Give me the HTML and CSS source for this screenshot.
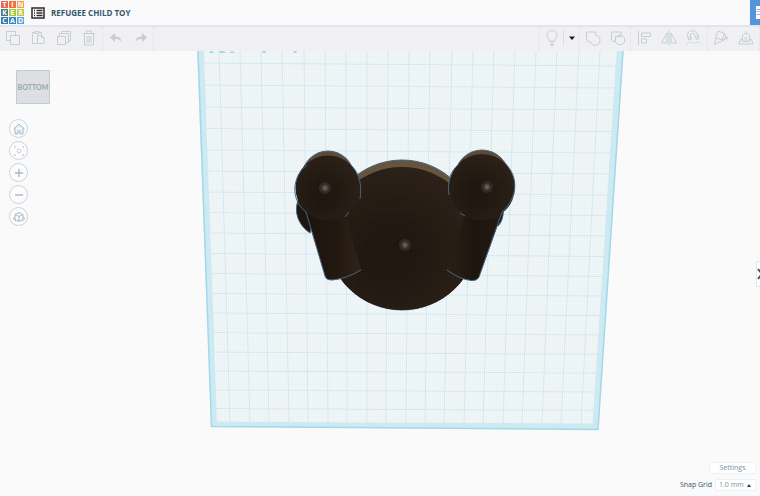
FILE: index.html
```html
<!DOCTYPE html>
<html lang="en">
<head>
<meta charset="utf-8">
<title>REFUGEE CHILD TOY</title>
<link rel="stylesheet" href="styles.css">
</head>
<body>
<header class="header">
  <a class="logo" href="#" aria-label="Tinkercad home">
    <span class="red">T</span><span class="orange">I</span><span class="peach">N</span>
    <span class="slate">K</span><span class="green">E</span><span class="lime">R</span>
    <span class="navy">C</span><span class="blue">A</span><span class="sky">D</span>
  </a>
  <button class="menu" aria-label="Designs">
    <svg width="14" height="12" viewBox="0 0 14 12"><rect x="1" y="1" width="12" height="10" fill="#fff" stroke="#3c3537" stroke-width="1.6"/><path d="M3 3.5h1M3 6h1M3 8.5h1M5.500 3.500h6M5.500 6h6M5.500 8.500h6" stroke="#302a30" stroke-width="1.3"/></svg>
  </button>
  <h1 class="title">REFUGEE CHILD TOY</h1>
  <button class="view" aria-label="3D design view">
    <svg width="10" height="25" viewBox="0 0 10 25"><path d="M6 6h4v5H6zM6 11.500h4v3H6zM6 15h4v4H6z" fill="#fff"/><path d="M7 9.500h3M7 14.500h3" stroke="#83b2e2"/></svg>
  </button>
</header>
<nav class="toolbar" aria-label="Tools">
  <div class="group edit">
    <button aria-label="Copy"><svg viewBox="0 0 16 16"><path d="M1.500 1.500h9v9h-9z"/><path d="M5.500 5.500h9v9h-9z" fill="#f0f0f3"/></svg></button>
    <button aria-label="Paste"><svg viewBox="0 0 16 16"><path d="M7 13.500H2.500v-11H5M9 2.500h2.500V5M5 1.500h4v2H5z"/><path d="M7.500 5.500h4l2.500 2v6H7.500zM11.500 5.500v2H14"/></svg></button>
    <button aria-label="Duplicate"><svg viewBox="0 0 16 16"><path d="M5.500 1.500h9v9h-9z"/><path d="M3.500 3.500h9v9h-9z" fill="#f0f0f3"/><path d="M1.500 6.500h8v8h-8z" fill="#f0f0f3"/></svg></button>
    <button aria-label="Delete"><svg viewBox="0 0 16 16"><path d="M2 3.500h12M5.500 3V1h5v2M3.500 4v11h9V4M6 6v7M8 6v7M10 6v7"/></svg></button>
  </div>
  <div class="group history">
    <button aria-label="Undo"><svg viewBox="0 0 16 16"><path d="M7 3v3.500c4 0 6 1.500 6.500 5.500C12 9.500 10 9 7 9v3L2 7.500z" fill="#c3ced6" stroke="none"/></svg></button>
    <button aria-label="Redo"><svg viewBox="0 0 16 16"><path d="M9 3v3.500c-4 0-6 1.500-6.500 5.500C4 9.500 6 9 9 9v3l5-4.500z" fill="#c3ced6" stroke="none"/></svg></button>
  </div>
  <div class="group visibility">
    <button aria-label="Show all"><svg viewBox="0 0 16 16"><path d="M5.500 11C5.500 9 3 8.500 3 5.500a5 5 0 0 1 10 0c0 3-2.500 3.500-2.500 5.500zM6 12.500h4M6 14.500h4M7 15.500h2"/></svg></button>
    <button class="drop" aria-label="Visibility options"><svg viewBox="0 0 16 16"><path d="M5 6.500h6L8 10z" fill="#16191e" stroke="none"/></svg></button>
  </div>
  <div class="group combine">
    <button aria-label="Group"><svg viewBox="0 0 16 16"><path d="M1.500 2h9v3.200a5 5 0 1 1-5.300 6.300H3L1.500 10z"/></svg></button>
    <button aria-label="Ungroup"><svg viewBox="0 0 16 16"><path d="M5 11.500H3L1.500 10V2H11v3"/><circle cx="10" cy="10" r="4.800"/><path d="M5.500 11V6.500H11"/></svg></button>
  </div>
  <div class="group arrange">
    <button aria-label="Align"><svg viewBox="0 0 16 16"><path d="M2.500 1v14M5.500 3h9v3.500h-9zM5.500 9h5v4h-5z"/></svg></button>
    <button aria-label="Mirror"><svg viewBox="0 0 16 16"><path d="M8 .5v15M6 3v10H.5zM10 3v10h5.500z"/></svg></button>
    <button aria-label="Snap"><svg viewBox="0 0 16 16"><path d="M3 10C0 4 2 .8 6.500 .8c4 0 5 3 6.500 7.700l-2.500 1C9 5.500 8.500 3.300 6.500 3.300 4 3.300 4 5.500 5.500 9zM2.500 8l2.300-1M9.500 7l2.800-1"/><path d="M1 14c4-4 5 0 8-1s3-2 6 1" stroke-dasharray="2 1"/></svg></button>
  </div>
  <div class="group place">
    <button aria-label="Workplane"><svg viewBox="0 0 16 16"><path d="M3 8L1.500 14.500 15 8l-2.500-2M5 1l6.500 2.500L9 10 2.500 7.500zM11.500 3.500L13 8l-4 2"/></svg></button>
    <button aria-label="Cruise"><svg viewBox="0 0 16 16"><path d="M4 9.500H2.500L1 14h14l-1.500-4.500H12M4.500 11.500V7c0-2 1-3.500 3.500-3.500S11.500 5 11.500 7v4.500zM8 1v2.500M6.500 8h3M6.500 10h3"/></svg></button>
  </div>
</nav>
<main class="workspace">
  <svg class="scene" viewBox="0 51 760 445" preserveAspectRatio="xMidYMin slice" role="img" aria-label="Workplane with bear model">
    <defs>
      <pattern id="fine" width="2" height="2" patternUnits="userSpaceOnUse"><path d="M0 0h1v1H0z" fill="#e6f0f2"/></pattern>
      <pattern id="mesh" width="2" height="2" patternUnits="userSpaceOnUse"><path d="M0 0h1v1H0z" fill="#44372a" opacity=".28"/></pattern>
      <radialGradient id="skin" cx=".42" cy=".6" r=".65"><stop offset=".2" stop-color="#1e160f"/><stop offset="1" stop-color="#2b2118"/></radialGradient>
      <linearGradient id="arm"><stop stop-color="#1b140e"/><stop offset=".55" stop-color="#21180f"/><stop offset="1" stop-color="#302419"/></linearGradient>
      <linearGradient id="arm2"><stop stop-color="#2b2016"/><stop offset=".5" stop-color="#1d150f"/><stop offset="1" stop-color="#261b12"/></linearGradient>
      <g id="pole"><circle r="6" fill="#342a22"/><circle r="3.500" fill="#42372f"/><path d="M-3 0h6M0-3v6M-2-2l4 4M2-2l-4 4" stroke="#766e68" stroke-width=".7"/></g>
    </defs>
    <path d="M197 51L211.500 427 598 429.500 623.500 51z" fill="#cdeaf3"/>
    <path d="M204 51L217 421.500 592.500 423.500 616.500 51z" fill="#f0f6f8"/>
    <path d="M204 51L217 421.500 592.500 423.500 616.500 51z" fill="url(#fine)"/>
    <path d="M219 51l11 374M240 51l10 374M261 51l8 374M282 51l7 374M304 51l4 374M325 51l3 374M346 51l1 374M367 51v374M388 51l-2 374M409 51l-3 374M430 51l-5 374M452 51l-8 374M473 51l-9 374M494 51l-11 374M515 51l-12 374M536 51l-14 374M557 51l-15 374M579 51l-18 374M600 51l-19 374" class="grid"/>
    <path d="M199 63l423 3M200 85l420 3M201 107l418 3M202 128.500l415 3M203 150l413 3M203 171l411 3M204 192l409 3M205 212.500l407 3M206 233l404 3M206 253.500l403 3M207 273.500l400 3M208 293.500l398 2.500M208 313l396 2.500M209 332.500l394 2.500M210 352l391 2.500M210 371l390 2M211 390l388 2M211 408.500l387 2" class="grid"/>
    <path d="M198 51L211.500 426.500 598 429.500 623 51" fill="none" stroke="#a3d8ea" stroke-width="1.500"/>
    <path d="M210 51h3v1h1v1h-5v-1h1zM219 51h5v1h2v1h-6v-1h-1zM231 51h2v1h2v1h-5v-1h1zM262 51h4v2h-3v-1h-1zM293 51h4v1h-1v1h-2v-1h-1z" fill="#a9d9e8"/>
    <g stroke="#47637a" stroke-width="1">
      <path d="M299 198C293 211 298 225 310 233l8-30z" fill="#1e1711"/>
      <path d="M503 208c1 7-1 14-5 18l-7-12z" fill="#1e1711"/>
      <ellipse cx="402" cy="235" rx="75" ry="75" fill="#67543f"/>
      <circle cx="328" cy="177" r="26" fill="#5c4a37"/>
      <circle cx="482" cy="177" r="27" fill="#5c4a37"/>
    </g>
    <ellipse cx="402" cy="238.500" rx="74.500" ry="71.500" fill="url(#skin)"/>
    <ellipse cx="402" cy="238.500" rx="74.500" ry="71.500" fill="url(#mesh)" opacity=".6"/>
    <path d="M305 208L325 276q1 4 7 4 14-1 29-10L345 214z" fill="url(#arm)"/>
    <path d="M504 208L479 277q-2 4-8 3.500-12-1.500-24-10.500L465 214z" fill="url(#arm2)"/>
    <circle cx="328" cy="188" r="32.500" fill="url(#skin)"/>
    <circle cx="482" cy="187" r="33" fill="url(#skin)"/>
    <circle cx="328" cy="188" r="32.500" fill="url(#mesh)" opacity=".5"/>
    <circle cx="482" cy="187" r="33" fill="url(#mesh)" opacity=".5"/>
    <path d="M307 165C292 176 290 200 306 212L325 276q1 4 7 4 14-1 29-10M351 165c9 9 11 21 9 34M345 217l4-5M459 164c-9 7-12 18-10 31M460 213l5 3M447 270q12 9 24 10.500 6 .5 8-3.500l23-65c16-15 17-35 3-49" fill="none" stroke="#466681"/>
    <use href="#pole" x="325" y="188"/><use href="#pole" x="487" y="187"/><use href="#pole" x="405" y="245"/>
  </svg>
  <aside class="camera">
    <button class="cube">BOTTOM</button>
    <button class="round" aria-label="Home view"><svg viewBox="0 0 16 16"><path d="M2.500 8L8 3l5.500 5M4 7v6h3v-3h2v3h3V7" fill="#e6f1f6"/></svg></button>
    <button class="round" aria-label="Fit view"><svg class="faint" viewBox="0 0 16 16"><circle cx="8" cy="8" r="2"/><path d="M3.500 5V3.500H5M11 3.500h1.500V5M3.500 11v1.500H5M11 12.500h1.500V11"/></svg></button>
    <button class="round" aria-label="Zoom in"><svg viewBox="0 0 16 16"><path d="M4 8h8M8 4v8" stroke-width="1.400"/></svg></button>
    <button class="round" aria-label="Zoom out"><svg viewBox="0 0 16 16"><path d="M4 8h8" stroke-width="1.400"/></svg></button>
    <button class="round" aria-label="Perspective"><svg viewBox="0 0 16 16"><path d="M4 5.500L8 3.500l4 2v5l-4 2-4-2zM4 5.500l4 2 4-2M8 7.500v5M3.500 8C1.500 9 3 11 5 12M12.500 8c2 1 .5 3-1.500 4"/></svg></button>
  </aside>
  <button class="expand" aria-label="Show shapes panel"><svg width="4" height="16" viewBox="0 0 4 16"><path d="M1 3l4 5-4 5" fill="none" stroke="#32566a" stroke-width="2"/></svg></button>
  <footer class="options">
    <button class="settings">Settings</button>
    <div class="snap">
      <label for="snap">Snap Grid</label>
      <span class="picker"><select id="snap"><option>1.0 mm</option></select><svg width="4" height="3" viewBox="0 0 4 3"><path d="M0 3h4L2 0z" fill="#263f50"/></svg></span>
    </div>
  </footer>
</main>
</body>
</html>
```

FILE: styles.css
```css
* { box-sizing: border-box; }
body {
  margin: 0;
  min-height: 100vh;
  display: flex;
  flex-direction: column;
  overflow: hidden;
  background: #fafafa;
  color: #36566b;
  font-family: "Open Sans", "Noto Sans", sans-serif;
}
button { padding: 0; border: 0; background: none; color: inherit; font: inherit; }
svg { display: block; }

.header { display: flex; align-items: center; height: 25px; }
.logo {
  display: grid;
  grid-template-columns: repeat(3, 8px);
  grid-auto-rows: 8px;
  width: 24px;
  height: 24px;
  margin-right: 7px;
  color: #fff;
  font-size: 7px;
  font-weight: 700;
  line-height: 7px;
  text-align: center;
  text-decoration: none;
}
.logo span { border: solid #fafafa; border-width: 0 0 1px 1px; }
.red { background: #ee624b; }
.orange { background: #f0713e; }
.peach { background: #f5a052; }
.slate { background: #4a7688; }
.green { background: #a8c93c; }
.lime { background: #b8cf3c; }
.navy { background: #377aae; }
.blue { background: #3485c5; }
.sky { background: #5aa2df; }
.title { margin: 0 auto 0 6px; font-size: 8px; line-height: 12px; font-weight: 700; }
.view { background: #5594da; }

.toolbar {
  display: flex;
  height: 26px;
  background: #f0f0f3;
  border-top: 2px solid #e2e5eb;
}
.group { display: flex; align-items: center; padding-bottom: 2px; border-right: 1px dotted #dcdfe4; }
.group button { display: flex; flex: 1; justify-content: center; }
.group svg { flex: none; width: 16px; height: 16px; fill: none; stroke: #c3ced6; stroke-width: 1; }
.edit { width: 103px; }
.history { width: 51px; }
.visibility { width: 41px; margin-left: auto; border-left: 1px dotted #dcdfe4; }
.group .drop { flex: none; width: 16px; border-left: 1px solid #dcdfe4; }
.combine { width: 51px; }
.arrange { width: 77px; }
.place { width: 52px; }

.workspace { position: relative; flex: 1; display: flex; justify-content: space-between; align-items: flex-end; }
.scene { position: absolute; inset: 0; width: 100%; height: 100%; }
.grid { fill: none; stroke: #d3e9ef; stroke-width: 1; }
.camera {
  position: relative;
  align-self: flex-start;
  display: flex;
  flex-direction: column;
  gap: 3px;
  padding: 19px 0 0 9px;
}
.cube {
  width: 34px;
  height: 34px;
  margin: 0 0 12px 7px;
  border: 1px solid #bfccd5;
  background: #dedfe2;
  color: #9aabb7;
  font-family: Lato, sans-serif;
  font-size: 7px;
  font-weight: 900;
  display: flex;
  align-items: center;
  justify-content: center;
}
.round {
  width: 19px;
  height: 19px;
  border: 1px solid #ccd4dc;
  border-radius: 50%;
  background: #fcfcfd;
  display: flex;
  align-items: center;
  justify-content: center;
}
.round svg { flex: none; width: 16px; height: 16px; fill: none; stroke: #a6b9c6; }
.round .faint { stroke: #c6d1d9; }
.expand {
  position: absolute;
  right: 0;
  top: 210px;
  width: 4px;
  height: 26px;
  border: solid #e5e7ea;
  border-width: 1px 0 1px 1px;
  background: #fff;
}
.options {
  position: relative;
  display: flex;
  flex-direction: column;
  align-items: flex-end;
  gap: 5px;
  padding: 0 4px 5px 0;
  font-size: 7px;
  line-height: 12px;
}
.settings, .picker { border: 1px solid #eff0f2; border-radius: 1px; background: #fff; }
.settings { width: 47px; height: 12px; line-height: 10px; color: #7d919e; }
.snap { display: flex; align-items: center; gap: 3px; }
.picker { display: flex; align-items: center; width: 41px; height: 12px; padding: 0 4px 0 3px; }
.picker select {
  appearance: none;
  flex: 1;
  min-width: 0;
  padding: 0;
  border: 0;
  background: none;
  color: #7d919e;
  font: inherit;
  line-height: 10px;
}
```
